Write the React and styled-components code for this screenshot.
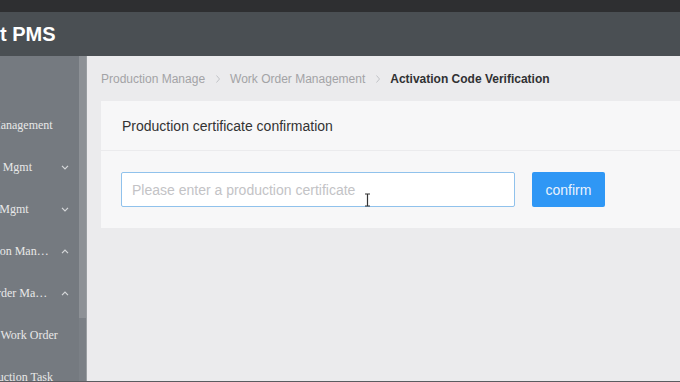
import React from 'react'
import styled, { createGlobalStyle } from 'styled-components';

const GlobalStyle = createGlobalStyle`
  html, body {
    margin: 0;
    height: 100%;
    overflow: hidden;
    background: #ebebed;
  }
  #root {
    height: 100%;
  }
`;

const menu = [
  { label: 'Order Management' },
  { label: 'Material Mgmt', arrow: 'down' },
  { label: 'Product Mgmt', arrow: 'down' },
  { label: 'Production Management', arrow: 'up' },
  { label: 'Work Order Management', arrow: 'up' },
  { label: 'New Work Order', sub: true },
  { label: 'Production Task', sub: true },
];

const Chevron = ({ dir }) => (
  <ChevronIcon viewBox="0 0 8 5" width="8" height="5">
    {dir === 'up'
      ? <polyline points="1,4.2 4,1.2 7,4.2" />
      : <polyline points="1,0.8 4,3.8 7,0.8" />}
  </ChevronIcon>
);

const Crumb = () => (
  <Sep viewBox="0 0 6 10" width="6" height="10">
    <polyline points="1.5,1.5 4.5,5 1.5,8.5" />
  </Sep>
);

const App = () => {
  return (
    <Page>
      <GlobalStyle />
      <BrowserStrip />
      <Shifted>
        <Header>
          <Logo>Smart PMS</Logo>
        </Header>
        <Body>
          <Sidebar>
            <Menu>
              {menu.map((m) => (
                <MenuItem key={m.label} $sub={m.sub}>
                  <Label $arrow={!!m.arrow}>{m.label}</Label>
                  {m.arrow && <Chevron dir={m.arrow} />}
                </MenuItem>
              ))}
            </Menu>
            <ScrollTrack>
              <Thumb />
            </ScrollTrack>
          </Sidebar>

          <Main>
            <Breadcrumb>
              <span>Production Manage</span>
              <Crumb />
              <span>Work Order Management</span>
              <Crumb />
              <strong>Activation Code Verification</strong>
            </Breadcrumb>

            <Card>
              <CardHead>Production certificate confirmation</CardHead>
              <CardBody>
                <InputWrap>
                  <Input placeholder="Please enter a production certificate" />
                  {/* mouse text cursor */}
                  <Cursor viewBox="0 0 7 14" width="7" height="14">
                    <path d="M1 1h5M3.5 1v12M1 13h5" />
                  </Cursor>
                </InputWrap>
                <Button>confirm</Button>
              </CardBody>
            </Card>
          </Main>
        </Body>
      </Shifted>
    </Page>
  )
}

const Page = styled.div`
  height: 100%;
  display: flex;
  flex-direction: column;
  overflow: hidden;
  border-bottom: 1px solid #5a5c60;
  box-sizing: border-box;
`;

const BrowserStrip = styled.div`
  height: 12px;
  flex: 0 0 12px;
  background: #2e2f31;
`;

const Shifted = styled.div`
  flex: 1;
  display: flex;
  flex-direction: column;
  margin-left: -60px;
  min-height: 0;
`;

const Header = styled.header`
  height: 44px;
  flex: 0 0 44px;
  background: #4a4f53;
  display: flex;
  align-items: center;
  padding-left: 10px;
`;

const Logo = styled.div`
  font-family: "Liberation Sans", Arial, sans-serif;
  font-weight: bold;
  font-size: 20px;
  color: #ffffff;
  white-space: nowrap;
`;

const Body = styled.div`
  flex: 1;
  display: flex;
  min-height: 0;
`;

const Sidebar = styled.aside`
  width: 147px;
  flex: 0 0 147px;
  display: flex;
  background: #757a80;
`;

const Menu = styled.nav`
  width: 140px;
  padding-top: 48px;
  overflow: hidden;
`;

const MenuItem = styled.div`
  height: 42px;
  display: flex;
  align-items: center;
  padding-left: ${({ $sub }) => ($sub ? '35px' : '19px')};
`;

const Label = styled.span`
  width: ${({ $arrow }) => ($arrow ? '92px' : '110px')};
  font-family: "Liberation Serif", "Times New Roman", serif;
  font-size: 12px;
  color: #e8e8e8;
  white-space: nowrap;
  overflow: hidden;
  text-overflow: ellipsis;
`;

const ChevronIcon = styled.svg`
  margin-left: 10px;
  fill: none;
  stroke: #d6d8da;
  stroke-width: 1.2;
`;

const ScrollTrack = styled.div`
  width: 7px;
  background: #7b8086;
  border-right: 1px solid #9a9ea2;
`;

const Thumb = styled.div`
  height: 262px;
  background: #8d9196;
`;

const Main = styled.main`
  flex: 1;
  background: #ebebed;
  padding: 14px 0 0 14px;
  min-width: 0;
`;

const Breadcrumb = styled.div`
  height: 18px;
  display: flex;
  align-items: center;
  font-family: "Liberation Sans", Arial, sans-serif;
  font-size: 12px;
  color: #a3a3a6;
  white-space: nowrap;
  margin-bottom: 13px;
  strong {
    color: #303133;
    font-weight: bold;
  }
`;

const Sep = styled.svg`
  margin: 0 9px 0 10px;
  fill: none;
  stroke: #c2c4c8;
  stroke-width: 1;
`;

const Card = styled.section`
  background: #f7f7f8;
  width: 700px;
`;

const CardHead = styled.div`
  height: 49px;
  display: flex;
  align-items: center;
  padding-left: 21px;
  border-bottom: 1px solid #ebebed;
  font-family: "Liberation Sans", Arial, sans-serif;
  font-size: 14px;
  color: #333;
`;

const CardBody = styled.div`
  display: flex;
  align-items: center;
  gap: 17px;
  padding: 21px 20px 21px 20px;
`;

const InputWrap = styled.div`
  position: relative;
  width: 394px;
  height: 35px;
`;

const Input = styled.input`
  width: 100%;
  height: 100%;
  box-sizing: border-box;
  border: 1px solid #90c2ec;
  border-radius: 2px;
  background: #ffffff;
  padding: 0 10px;
  font-family: "Liberation Sans", Arial, sans-serif;
  font-size: 14px;
  color: #333;
  outline: none;
  &::placeholder {
    color: #c3c3c6;
  }
`;

const Cursor = styled.svg`
  position: absolute;
  left: 243px;
  top: 21px;
  fill: none;
  stroke: #333;
  stroke-width: 1.2;
`;

const Button = styled.button`
  width: 73px;
  height: 35px;
  border: none;
  border-radius: 2px;
  background: #2f97f5;
  color: #eaf3fd;
  font-family: "Liberation Sans", Arial, sans-serif;
  font-size: 14px;
  cursor: pointer;
`;

export default App;
